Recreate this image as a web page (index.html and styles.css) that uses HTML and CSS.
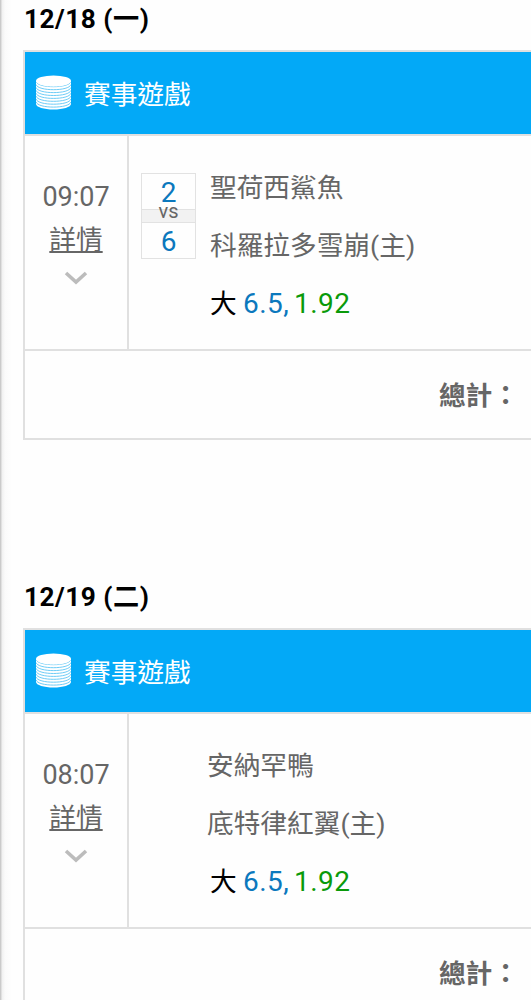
FILE: index.html
```html
<!DOCTYPE html>
<html lang="zh-Hant">
<head>
<meta charset="utf-8">
<title>賽事遊戲</title>
<link rel="stylesheet" href="styles.css">
</head>
<body>
<svg class="defs" width="0" height="0" aria-hidden="true">
  <symbol id="coins" viewBox="0 0 35 35">
    <path d="M0 6V29C0 32 8 34.500 17.500 34.500S35 32 35 29V6Z" fill="#fff"/>
    <g fill="none" stroke="#5cc6f5" stroke-width="0.900">
      <path d="M0 6.500C1 10 9 11.700 17.500 11.700S34 10 35 6.500"/>
      <path d="M0 9.500C1 13 9 14.700 17.500 14.700S34 13 35 9.500"/>
      <path d="M0 12.400C1 15.900 9 17.600 17.500 17.600S34 15.900 35 12.400"/>
      <path d="M0 15.300C1 18.800 9 20.500 17.500 20.500S34 18.800 35 15.300"/>
      <path d="M0 18.200C1 21.700 9 23.400 17.500 23.400S34 21.700 35 18.200"/>
      <path d="M0 21.100C1 24.600 9 26.300 17.500 26.300S34 24.600 35 21.100"/>
      <path d="M0 24C1 27.500 9 29.200 17.500 29.200S34 27.500 35 24"/>
      <path d="M0 26.900C1 30.400 9 32.100 17.500 32.100S34 30.400 35 26.900"/>
    </g>
    <ellipse cx="17.500" cy="6" rx="17.500" ry="5.500" fill="#fff"/>
  </symbol>
  <symbol id="chevron" viewBox="0 0 24 14">
    <path d="M2 2L12 11L22 2" fill="none" stroke="#bcbcbc" stroke-width="3.600"/>
  </symbol>
</svg>
<main class="page">
  <section class="day">
    <h2 class="date">12/18 (一)</h2>
    <div class="card">
      <header class="card-head"><svg class="coins"><use href="#coins"/></svg><span class="card-title">賽事遊戲</span></header>
      <div class="match">
        <div class="when">
          <span class="time">09:07</span>
          <a class="detail">詳情</a>
          <svg class="chevron"><use href="#chevron"/></svg>
        </div>
        <div class="info">
          <div class="score">
            <span class="points">2</span>
            <span class="vs">vs</span>
            <span class="points">6</span>
          </div>
          <div class="teams">
            <span class="team">聖荷西鯊魚</span>
            <span class="team">科羅拉多雪崩(主)</span>
            <div class="bet"><span class="pick">大</span><span class="line">6.5,</span><span class="odds">1.92</span></div>
          </div>
        </div>
      </div>
      <footer class="total">總計：</footer>
    </div>
  </section>
  <section class="day">
    <h2 class="date">12/19 (二)</h2>
    <div class="card">
      <header class="card-head"><svg class="coins"><use href="#coins"/></svg><span class="card-title">賽事遊戲</span></header>
      <div class="match">
        <div class="when">
          <span class="time">08:07</span>
          <a class="detail">詳情</a>
          <svg class="chevron"><use href="#chevron"/></svg>
        </div>
        <div class="info">
          <div class="teams teams-only">
            <span class="team">安納罕鴨</span>
            <span class="team">底特律紅翼(主)</span>
            <div class="bet"><span class="pick">大</span><span class="line">6.5,</span><span class="odds">1.92</span></div>
          </div>
        </div>
      </div>
      <footer class="total">總計：</footer>
    </div>
  </section>
</main>
</body>
</html>
```

FILE: styles.css
```css
* { box-sizing: border-box; }
html, body { margin: 0; height: 100%; overflow: hidden; }
body {
  font-family: Roboto, "Noto Sans CJK TC", sans-serif;
  font-size: 26.7px;
  color: #666;
  background: #fefefe;
}
.defs { display: block; }
.page {
  height: 1000px;
  overflow: hidden;
  padding-left: 23px;
  background: linear-gradient(90deg, #c4c4c4 0, #d0d0d0 1px, #f0f0f0 2px, #fafafa 5px, #fefefe 12px);
}
.day { height: 578px; }
.date {
  margin: 0;
  height: 50px;
  padding: 0 0 0 1px;
  line-height: 38px;
  font-size: 26.2px;
  font-weight: 700;
  letter-spacing: 0.5px;
  color: #000;
}
.card {
  height: 390px;
  border: 2px solid #e0e0e0;
  border-right: 0;
  display: flex;
  flex-direction: column;
}
.card-head {
  height: 84px;
  border-bottom: 2px solid #e0e0e0;
  background: #03a9f7;
  background-clip: padding-box;
  display: flex;
  align-items: center;
  gap: 13px;
  padding: 3px 0 0 11px;
  color: #fff;
}
.coins { width: 35px; height: 35px; margin-bottom: 4px; }
.card-title { padding-bottom: 4px; }
.match { display: flex; height: 215px; border-bottom: 2px solid #e0e0e0; }
.when {
  width: 104px;
  border-right: 2px solid #e0e0e0;
  padding-top: 40px;
  display: flex;
  flex-direction: column;
  align-items: center;
}
.time { line-height: 43px; font-size: 27px; }
.detail {
  line-height: 43px;
  text-decoration: underline;
  text-decoration-thickness: 2px;
  text-underline-offset: 2px;
}
.chevron { width: 24px; height: 14px; margin-top: 9px; }
.info { display: flex; padding-left: 12px; }
.score {
  width: 55px;
  height: 86px;
  margin-top: 37px;
  border: 1px solid #e2e2e2;
  display: flex;
  flex-direction: column;
  text-align: center;
}
.points { height: 35px; line-height: 37px; color: #0b78bd; font-size: 28px; }
.vs {
  height: 14px;
  line-height: 2px;
  font-size: 20px;
  background: #f2f2f2;
  border: solid #e2e2e2;
  border-width: 1px 0;
}
.teams { display: flex; flex-direction: column; padding: 24px 0 0 14px; }
.teams-only { padding-left: 66px; }
.team { line-height: 57.5px; white-space: nowrap; }
.bet { display: flex; line-height: 58px; font-size: 28px; letter-spacing: 0.5px; }
.pick { font-size: 26.7px; color: #000; width: 33px; }
.teams-only .bet { padding-left: 3px; }
.line { color: #0b78bd; width: 51px; }
.odds { color: #0a9a0a; }
.total {
  flex: 1;
  display: flex;
  align-items: center;
  justify-content: flex-end;
  padding: 0 12px 3px 0;
  font-weight: 700;
}
```
